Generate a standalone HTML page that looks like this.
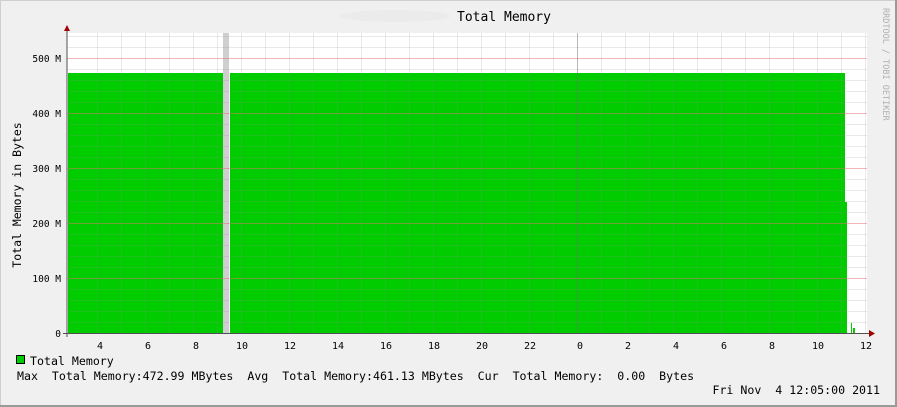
<!DOCTYPE html>
<html><head><style>
html,body{margin:0;padding:0;background:#f0f0f0}
svg{display:block}
text{font-family:"DejaVu Sans Mono","Liberation Mono",monospace;fill:#000}
</style></head><body>
<svg width="897" height="407" viewBox="0 0 897 407" xmlns="http://www.w3.org/2000/svg">
<rect x="0" y="0" width="897" height="407" fill="#f0f0f0"/>
<rect x="0.5" y="0.5" width="895" height="405" fill="none" stroke="#cfcfcf" stroke-width="1"/>
<line x1="0" y1="406" x2="897" y2="406" stroke="#9a9a9a" stroke-width="2"/>
<line x1="896" y1="0" x2="896" y2="407" stroke="#9a9a9a" stroke-width="2"/>
<rect x="67" y="33" width="800" height="300" fill="#ffffff"/>
<rect x="68" y="73" width="155" height="260" fill="#00cc00"/>
<rect x="223" y="33" width="6" height="300" fill="#cfcfcf"/>
<rect x="230" y="73" width="615" height="260" fill="#00cc00"/>
<rect x="845" y="202" width="2" height="131" fill="#00cc00"/>
<rect x="851" y="323" width="1" height="10" fill="#00cc00"/>
<rect x="853" y="328" width="2" height="5" fill="#00cc00"/>
<g id="grid2"></g>
<line x1="67" y1="337" x2="67" y2="30" stroke="#505050"/>
<line x1="63" y1="333.5" x2="870" y2="333.5" stroke="#505050"/>
<polygon points="64,31 70,31 67,25" fill="#a00000"/>
<polygon points="869,330 869,337 875,333.5" fill="#a00000"/>
<g font-size="9.5" text-anchor="end">
<text x="61" y="62">500 M</text>
<text x="61" y="117">400 M</text>
<text x="61" y="172">300 M</text>
<text x="61" y="227">200 M</text>
<text x="61" y="282">100 M</text>
<text x="61" y="337">0</text>
</g>
<g font-size="10" text-anchor="middle">
<text x="100" y="349">4</text><text x="148" y="349">6</text><text x="196" y="349">8</text>
<text x="242" y="349">10</text><text x="290" y="349">12</text><text x="338" y="349">14</text>
<text x="386" y="349">16</text><text x="434" y="349">18</text><text x="482" y="349">20</text>
<text x="530" y="349">22</text><text x="580" y="349">0</text><text x="628" y="349">2</text>
<text x="676" y="349">4</text><text x="724" y="349">6</text><text x="772" y="349">8</text>
<text x="818" y="349">10</text><text x="866" y="349">12</text>
</g>
<ellipse cx="395" cy="16" rx="55" ry="6" fill="#e8e8e8" opacity="0.7"/>
<text x="504" y="21" font-size="13" text-anchor="middle">Total Memory</text>
<text transform="translate(21,195) rotate(-90)" font-size="11.5" text-anchor="middle">Total Memory in Bytes</text>
<text transform="translate(883,8) rotate(90)" font-size="8.5" style="fill:#b0b0b0">RRDTOOL / TOBI OETIKER</text>
<rect x="16.5" y="355.5" width="8" height="8" fill="#00cc00" stroke="#000"/>
<g font-size="11.6">
<text x="30" y="365" xml:space="preserve">Total Memory</text>
<text x="17" y="380" xml:space="preserve">Max  Total Memory:472.99 MBytes  Avg  Total Memory:461.13 MBytes  Cur  Total Memory:  0.00  Bytes</text>
<text x="880" y="394" text-anchor="end" xml:space="preserve">Fri Nov  4 12:05:00 2011</text>
</g>
</svg>
<script>
(function(){
var ns="http://www.w3.org/2000/svg";
var g=document.getElementById('grid2');
function ln(x1,y1,x2,y2,c,o){var l=document.createElementNS(ns,'line');l.setAttribute('x1',x1);l.setAttribute('y1',y1);l.setAttribute('x2',x2);l.setAttribute('y2',y2);l.setAttribute('stroke',c);l.setAttribute('stroke-opacity',o);g.appendChild(l);}
for(var k=1;k<=27;k++){var y=333-11*k+0.5;var maj=(k%5==0);ln(67,y,867,y,maj?'#e07070':'#909090',maj?0.5:0.2);}
for(var k=0;k<=32;k++){var x=97+24*k+0.5;ln(x,33,x,333,k==20?'#707070':'#909090',k==20?0.5:0.2);}
})();
</script>
</body></html>
